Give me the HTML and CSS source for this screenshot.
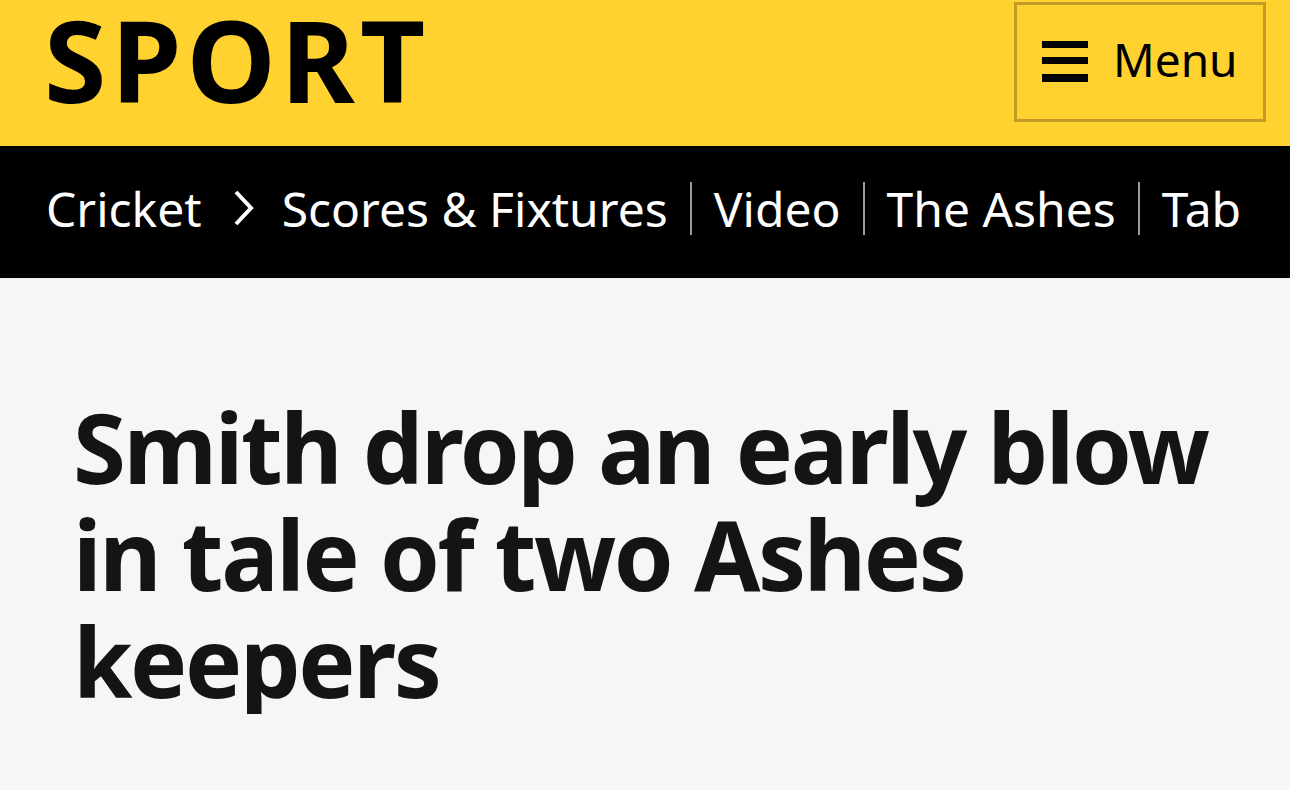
FILE: index.html
```html
<!DOCTYPE html>
<html lang="en">
<head>
<meta charset="UTF-8">
<meta name="viewport" content="width=device-width, initial-scale=1.0">
<title>Smith drop an early blow in tale of two Ashes keepers - BBC Sport</title>
<link rel="stylesheet" href="styles.css">
</head>
<body>
<header class="masthead">
    <a class="brand" href="#">SPORT</a>
    <button class="menu-btn" type="button">
        <svg class="menu-icon" width="46" height="42" viewBox="0 0 46 42" aria-hidden="true">
            <rect x="0" y="0" width="46" height="7" fill="#000"/>
            <rect x="0" y="16" width="46" height="7" fill="#000"/>
            <rect x="0" y="33" width="46" height="8" fill="#000"/>
        </svg>
        <span>Menu</span>
    </button>
</header>

<nav class="subnav">
    <a class="crumb" href="#">Cricket</a>
    <svg class="chevron" width="24" height="38" viewBox="0 0 24 38" aria-hidden="true">
        <polyline points="4,3 19,19 4,35" fill="none" stroke="#fff" stroke-width="4"/>
    </svg>
    <ul class="links">
        <li><a href="#">Scores &amp; Fixtures</a></li>
        <li><a href="#">Video</a></li>
        <li><a href="#">The Ashes</a></li>
        <li><a href="#">Tables</a></li>
    </ul>
</nav>

<main class="article">
    <h1 class="headline">Smith drop an early blow in tale of two Ashes keepers</h1>
</main>
</body>
</html>
```

FILE: styles.css
```css
body {
    margin: 0;
    padding: 0;
    font-family: "Noto Sans", "Open Sans", Arial, sans-serif;
    background-color: #f6f6f6;
    color: #141414;
    overflow: hidden;
}
a {
    color: inherit;
    text-decoration: none;
}

/* yellow top bar */
.masthead {
    height: 146px;
    background-color: #ffd230;
    display: flex;
    justify-content: space-between;
    align-items: flex-start;
    padding: 0 24px 0 44px;
    box-sizing: border-box;
}
.brand {
    display: block;
    font-size: 113px;
    font-weight: 700;
    line-height: 118px;
    color: #000;
    letter-spacing: 5px;
}
.menu-btn {
    margin-top: 2px;
    width: 252px;
    height: 120px;
    border: 3px solid #c29b26;
    background: transparent;
    display: flex;
    align-items: center;
    gap: 25px;
    padding: 0 0 6px 25px;
    font-family: inherit;
    font-size: 46px;
    color: #000;
    cursor: pointer;
}
.menu-icon {
    display: block;
    margin-top: 6px;
}

/* black section nav */
.subnav {
    height: 132px;
    box-sizing: border-box;
    padding: 0 46px 8px 46px;
    background-color: #000;
    color: #fff;
    display: flex;
    align-items: center;
    font-size: 48px;
    white-space: nowrap;
}
.chevron {
    margin: 0 26px 0 30px;
    flex-shrink: 0;
}
.links {
    list-style: none;
    margin: 0;
    padding: 0;
    display: flex;
    align-items: center;
    align-self: stretch;
    min-width: 0;
    overflow: hidden;
}
.links li {
    display: flex;
    align-items: center;
    padding: 0 22px;
    border-left: 2px solid #999;
    height: 53px;
}
.links li:first-child {
    padding-left: 0;
    border-left: none;
}

/* article heading */
.article {
    padding: 115px 40px 0 73px;
}
.headline {
    margin: 0;
    font-size: 96px;
    font-weight: 700;
    line-height: 107px;
    letter-spacing: -2.4px;
    color: #141414;
}
```
